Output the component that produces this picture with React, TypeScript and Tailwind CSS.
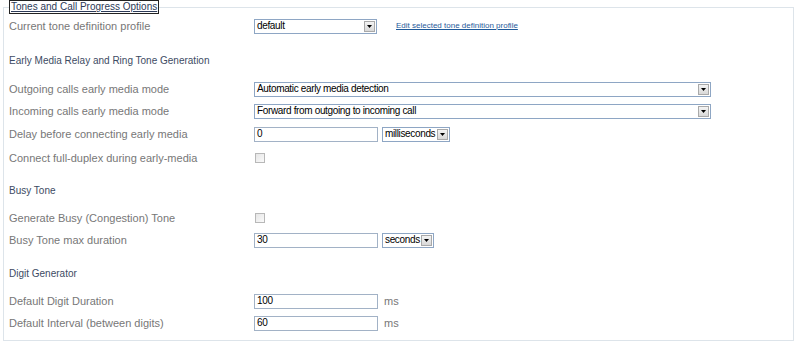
import React from 'react';

const font = { fontFamily: '"Liberation Sans", Arial, sans-serif' };

function Select({ value, width }: { value: string; width: string }) {
  return (
    <div className={`${width} h-[15px] flex items-center justify-between border border-[#8ea6c4] bg-white pl-[2px] pr-[1px]`}>
      <span className="text-[10px] tracking-[-0.35px] text-black leading-none whitespace-nowrap">{value}</span>
      <span className="shrink-0 w-[11px] h-[11px] flex items-center justify-center border border-[#a9a9a9] bg-gradient-to-b from-[#f4f4f4] to-[#d8d8d8]">
        <svg width="5" height="3" viewBox="0 0 5 3"><path d="M0 0h5L2.5 3z" fill="#000" /></svg>
      </span>
    </div>
  );
}

function Input({ value, width = 'w-[124px]' }: { value: string; width?: string }) {
  return (
    <div className={`${width} h-[15px] flex items-center border border-[#a2b2c6] bg-white pl-[2px]`}>
      <span className="text-[10px] tracking-[-0.35px] text-black leading-none">{value}</span>
    </div>
  );
}

function Checkbox() {
  return <span className="block w-[10px] h-[10px] border border-[#b8b8b8] bg-gradient-to-br from-[#e6e6e6] to-[#fafafa] ml-[1px]" />;
}

function Row({ label, children, mt = '' }: { label: string; children?: React.ReactNode; mt?: string }) {
  return (
    <div className={`flex items-center h-[22px] ${mt}`}>
      <div className="w-[245px] text-[11px] text-[#777777]">{label}</div>
      <div className="flex items-center gap-[4px]">{children}</div>
    </div>
  );
}

function Heading({ text, mt }: { text: string; mt: string }) {
  return <div className={`h-[22px] flex items-center text-[10px] text-[#3d4b63] ${mt}`}>{text}</div>;
}

export default function App() {
  return (
    <div className="w-[800px] h-[347px] bg-white pt-[7px]" style={font}>
      <div className="relative ml-[3px] w-[791px] h-[334px] border border-[#dde4ea] pl-[5px] pt-[7px]">
        <div className="absolute left-[5px] top-[-8px] bg-white border border-[#222] px-[1px] h-[14px] flex items-center">
          <span className="text-[10px] text-[#2c3a58] underline leading-none">Tones and Call Progress Options</span>
        </div>

        <Row label="Current tone definition profile">
          <Select value="default" width="w-[123px]" />
          <a className="ml-[15px] text-[8px] text-[#1f5a9a] underline">Edit selected tone definition profile</a>
        </Row>

        <Heading text="Early Media Relay and Ring Tone Generation" mt="mt-[12px]" />

        <Row label="Outgoing calls early media mode" mt="mt-[7px]">
          <Select value="Automatic early media detection" width="w-[457px]" />
        </Row>
        <Row label="Incoming calls early media mode">
          <Select value="Forward from outgoing to incoming call" width="w-[457px]" />
        </Row>
        <Row label="Delay before connecting early media" mt="mt-[1px]">
          <Input value="0" />
          <Select value="milliseconds" width="w-[68px]" />
        </Row>
        <Row label="Connect full-duplex during early-media" mt="mt-[2px]">
          <Checkbox />
        </Row>

        <Heading text="Busy Tone" mt="mt-[10px]" />

        <Row label="Generate Busy (Congestion) Tone" mt="mt-[6px]">
          <Checkbox />
        </Row>
        <Row label="Busy Tone max duration">
          <Input value="30" />
          <Select value="seconds" width="w-[52px]" />
        </Row>

        <Heading text="Digit Generator" mt="mt-[11px]" />

        <Row label="Default Digit Duration" mt="mt-[6px]">
          <Input value="100" />
          <span className="ml-[2px] text-[11px] text-[#777777]">ms</span>
        </Row>
        <Row label="Default Interval (between digits)">
          <Input value="60" />
          <span className="ml-[2px] text-[11px] text-[#777777]">ms</span>
        </Row>
      </div>
    </div>
  );
}
